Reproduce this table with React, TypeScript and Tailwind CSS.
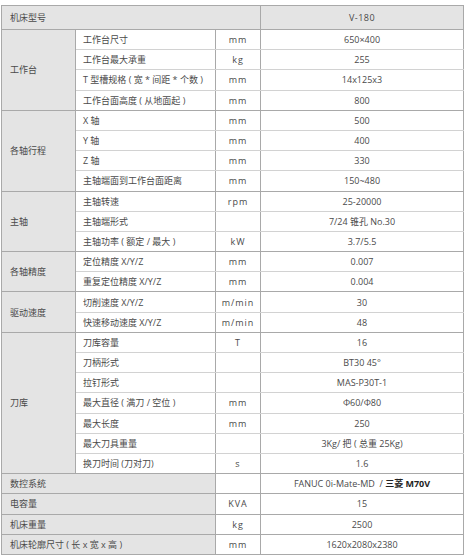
import React from 'react';

type Row = { name: string; unit: string; value: React.ReactNode };
type Group = { title: string; rows: Row[] };

const groups: Group[] = [
  {
    title: '工作台',
    rows: [
      { name: '工作台尺寸', unit: 'mm', value: '650×400' },
      { name: '工作台最大承重', unit: 'kg', value: '255' },
      { name: 'T 型槽规格 ( 宽 * 间距 * 个数 )', unit: 'mm', value: '14x125x3' },
      { name: '工作台面高度 ( 从地面起 )', unit: 'mm', value: '800' },
    ],
  },
  {
    title: '各轴行程',
    rows: [
      { name: 'X 轴', unit: 'mm', value: '500' },
      { name: 'Y 轴', unit: 'mm', value: '400' },
      { name: 'Z 轴', unit: 'mm', value: '330' },
      { name: '主轴端面到工作台面距离', unit: 'mm', value: '150~480' },
    ],
  },
  {
    title: '主轴',
    rows: [
      { name: '主轴转速', unit: 'rpm', value: '25-20000' },
      { name: '主轴端形式', unit: '', value: '7/24 锥孔 No.30' },
      { name: '主轴功率 ( 额定 / 最大 )', unit: 'kW', value: '3.7/5.5' },
    ],
  },
  {
    title: '各轴精度',
    rows: [
      { name: '定位精度 X/Y/Z', unit: 'mm', value: '0.007' },
      { name: '重复定位精度 X/Y/Z', unit: 'mm', value: '0.004' },
    ],
  },
  {
    title: '驱动速度',
    rows: [
      { name: '切削速度 X/Y/Z', unit: 'm/min', value: '30' },
      { name: '快速移动速度 X/Y/Z', unit: 'm/min', value: '48' },
    ],
  },
  {
    title: '刀库',
    rows: [
      { name: '刀库容量', unit: 'T', value: '16' },
      { name: '刀柄形式', unit: '', value: 'BT30 45°' },
      { name: '拉钉形式', unit: '', value: 'MAS-P30T-1' },
      { name: '最大直径 ( 满刀 / 空位 )', unit: 'mm', value: 'Φ60/Φ80' },
      { name: '最大长度', unit: 'mm', value: '250' },
      { name: '最大刀具重量', unit: '', value: '3Kg/ 把 ( 总重 25Kg)' },
      { name: '换刀时间 (刀对刀)', unit: 's', value: '1.6' },
    ],
  },
];

const singles: Row[] = [
  {
    name: '数控系统',
    unit: '',
    value: (
      <>
        FANUC 0i-Mate-MD&nbsp; / <span className="font-bold text-[#222]">三菱 M70V</span>
      </>
    ),
  },
  { name: '电容量', unit: 'KVA', value: '15' },
  { name: '机床重量', unit: 'kg', value: '2500' },
  { name: '机床轮廓尺寸 ( 长 x 宽 x 高 )', unit: 'mm', value: '1620x2080x2380' },
];

const gray = 'bg-[#e4e4e4]';
const cell = 'border border-[#a9a9a9] h-[20.2px] p-0';

export default function App() {
  return (
    <div className="w-[467px] h-[559px] bg-white pt-[5px] pl-[1px]">
      <table
        className="border-collapse table-fixed w-[462px] text-[9px] leading-none text-[#4a4a4a]"
        style={{ fontFamily: '"Open Sans", "Noto Sans CJK SC", sans-serif' }}
      >
        <colgroup>
          <col className="w-[74px]" />
          <col className="w-[140px]" />
          <col className="w-[45px]" />
          <col className="w-[203px]" />
        </colgroup>
        <tbody>
          <tr className="h-[24px]">
            <td colSpan={3} className={`border border-[#a9a9a9] ${gray} pl-2`}>机床型号</td>
            <td className={`border border-[#a9a9a9] ${gray} text-center tracking-[0.5px]`}>V-180</td>
          </tr>
          {groups.map((g) =>
            g.rows.map((r, i) => {
              const last = i === g.rows.length - 1;
              const rb = last ? 'border-b-[#a9a9a9]' : 'border-b-[#d2d2d2]';
              return (
                <tr key={g.title + i}>
                  {i === 0 && (
                    <td rowSpan={g.rows.length} className={`${cell} ${gray} pl-2`}>
                      {g.title}
                    </td>
                  )}
                  <td className={`${cell} ${rb} pl-[7px] whitespace-nowrap`}>{r.name}</td>
                  <td className={`${cell} ${rb} text-center tracking-[1px]`}>{r.unit}</td>
                  <td className={`${cell} ${rb} text-center`}>{r.value}</td>
                </tr>
              );
            })
          )}
          {singles.map((r) => (
            <tr key={r.name}>
              <td colSpan={2} className={`${cell} ${gray} pl-2`}>{r.name}</td>
              <td className={`${cell} text-center tracking-[1px]`}>{r.unit}</td>
              <td className={`${cell} text-center`}>{r.value}</td>
            </tr>
          ))}
        </tbody>
      </table>
    </div>
  );
}
